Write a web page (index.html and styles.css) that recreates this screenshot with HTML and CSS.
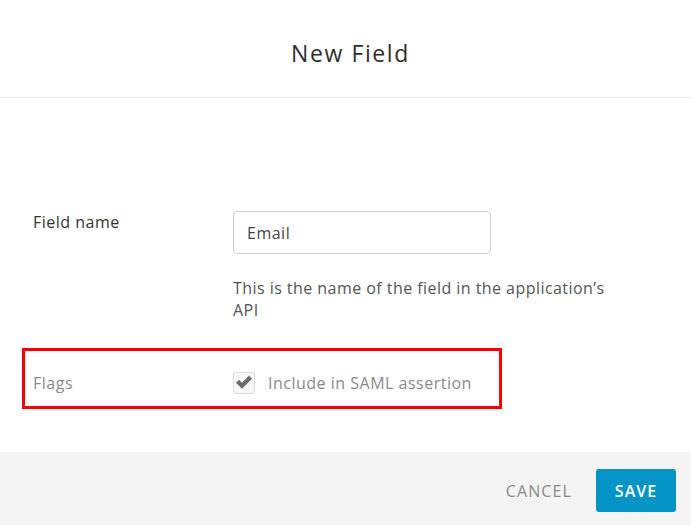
FILE: index.html
```html
<!DOCTYPE html>
<html>
<head>
<meta charset="utf-8">
<link rel="stylesheet" href="styles.css">
</head>
<body>
<div class="modal">
  <header class="modal-header">
    <h1 class="modal-title">New Field</h1>
  </header>
  <main class="modal-body">
    <div class="form-row">
      <label class="form-label">Field name</label>
      <div class="form-control">
        <input class="text-input" type="text" value="Email">
        <p class="hint">This is the name of the field in the application’s API</p>
      </div>
    </div>
    <div class="form-row flags-row">
      <span class="form-label muted">Flags</span>
      <div class="form-control check-line">
        <span class="checkbox">
          <svg width="18" height="15" viewBox="0 0 18 15"><path d="M1 7.8 L4 4.8 L7 7.8 L14 0.8 L17 3.8 L7 13.8 Z" fill="#6b6b6b"/></svg>
        </span>
        <span class="check-text">Include in SAML assertion</span>
      </div>
    </div>
  </main>
  <footer class="modal-footer">
    <button class="btn-cancel">CANCEL</button>
    <button class="btn-save">SAVE</button>
  </footer>
</div>
</body>
</html>
```
FILE: styles.css
```css
html, body {
  margin: 0;
  padding: 0;
  background: #fff;
}
body {
  font-family: "Open Sans", "Lato", sans-serif;
  color: #333;
}
.modal {
  width: 691px;
  height: 525px;
  display: flex;
  flex-direction: column;
}
.modal-header {
  height: 97px;
  border-bottom: 1px solid #e8e8e8;
  display: flex;
  align-items: center;
  justify-content: center;
}
.modal-title {
  margin: 0;
  font-size: 23px;
  font-weight: 400;
  color: #2e2e2e;
  letter-spacing: 1.6px;
  padding-top: 8px;
  padding-left: 10px;
}
.modal-body {
  flex: 1;
  padding-top: 113px;
}
.form-row {
  display: flex;
  padding-left: 33px;
}
.form-label {
  width: 200px;
  font-size: 16px;
  line-height: 20px;
  letter-spacing: 0.5px;
  padding-top: 1px;
  color: #333;
}
.form-label.muted {
  color: #8a8a8a;
  padding-top: 0;
}
.form-control {
  flex: 0 0 390px;
}
.text-input {
  box-sizing: border-box;
  width: 258px;
  height: 43px;
  border: 1px solid #cfcfcf;
  border-radius: 4px;
  padding: 0 13px;
  font-family: inherit;
  font-size: 16px;
  letter-spacing: 0.5px;
  color: #444;
  outline: none;
  display: block;
}
.hint {
  margin: 23px 0 0;
  font-size: 16px;
  line-height: 22px;
  letter-spacing: 0.45px;
  color: #555;
  width: 390px;
}
.flags-row {
  margin: 27px 0 0 22px;
  width: 466px;
  height: 47px;
  border: 3px solid #ff0000;
  padding-left: 8px;
  padding-top: 8px;
  align-items: center;
  box-sizing: content-box;
}
.flags-row .form-control {
  flex: none;
}
.check-line {
  display: flex;
  align-items: center;
}
.checkbox {
  box-sizing: border-box;
  width: 22px;
  height: 22px;
  border: 1px solid #dcdcdc;
  border-radius: 2px;
  background: #f7f7f7;
  display: flex;
  align-items: center;
  justify-content: center;
  margin-right: 13px;
}
.check-text {
  font-size: 16px;
  letter-spacing: 0.5px;
  color: #8a8a8a;
}
.modal-footer {
  height: 73px;
  background: #f4f4f4;
  display: flex;
  align-items: center;
  justify-content: flex-end;
  padding-right: 15px;
  padding-top: 4px;
  box-sizing: border-box;
}
.btn-cancel {
  background: none;
  border: none;
  font-family: inherit;
  font-size: 16px;
  letter-spacing: 1.1px;
  color: #8a8a8a;
  margin-right: 24px;
  padding: 0;
}
.btn-save {
  width: 80px;
  height: 43px;
  background: #0494c6;
  border: none;
  border-radius: 3px;
  color: #fff;
  font-family: inherit;
  font-size: 16px;
  font-weight: 600;
  letter-spacing: 1px;
}
```
